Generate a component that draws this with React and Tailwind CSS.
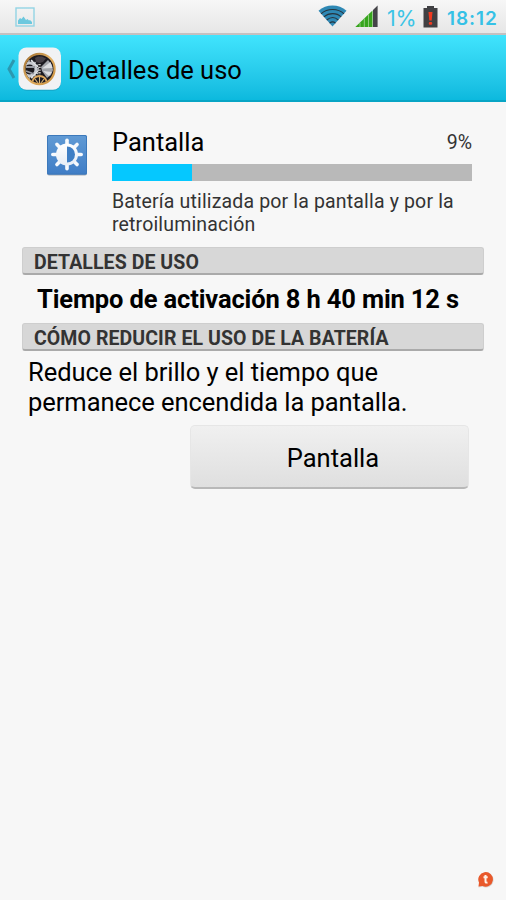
const TEETH = [0, 45, 90, 135, 180, 225, 270, 315]

function PictureIcon() {
  return (
    <svg width="20" height="20" viewBox="0 0 20 20" fill="none">
      <rect x="1" y="1" width="18" height="18" stroke="#93d4e4" strokeWidth="1.4" />
      <path d="M3 17V13.500L5 11L6.500 12L8.500 9.500L11 13L12.500 12L14 13.500L15 13L17 15V17Z" fill="#6cc8de" />
    </svg>
  )
}

function WifiIcon() {
  return (
    <svg width="30" height="24" viewBox="0 0 30 24" fill="none">
      <path d="M0.500 7.800C8 0.800 21 0.800 28.500 7.800L14.500 23.500Z" fill="#2e88b4" />
      <path d="M3 10.800C9.500 5 20 5 26 10.800M5.800 13.800C11 9.500 18.500 9.500 23.200 13.800M8.700 17C12.500 14 17 14 20.300 17M11.600 20.200C13.500 18.600 15.700 18.600 17.500 20.200" stroke="#27343d" strokeWidth="1.100" />
    </svg>
  )
}

function SignalIcon() {
  return (
    <svg width="24" height="23" viewBox="0 0 24 23">
      <path d="M0.300 22L17.500 5.500V22Z" fill="#36a51d" />
      <path d="M5 17.700V22M9.300 13.500V22M13.500 9.500V22" stroke="#b5dba9" strokeWidth="0.700" />
      <path d="M18 4.900L22.600 0.400V22H18Z" fill="#444348" />
    </svg>
  )
}

function BatteryIcon() {
  return (
    <svg width="15" height="22" viewBox="0 0 15 22">
      <path d="M4 0H11V2H14.500V21.500H0.500V2H4Z" fill="#404043" />
      <path d="M5.500 6H9.500L8.700 14.500H6.300Z" fill="#f03a20" />
      <rect x="5.800" y="16" width="3.400" height="2.800" rx="1" fill="#f03a20" />
    </svg>
  )
}

function GearsIcon() {
  return (
    <svg width="44" height="45" viewBox="0 0 44 45" fill="none">
      <defs>
        <linearGradient id="brass" x1="0" y1="0" x2="1" y2="1">
          <stop stopColor="#9c6a2c" />
          <stop offset="0.500" stopColor="#e3b266" />
          <stop offset="1" stopColor="#c98f3e" />
        </linearGradient>
        <clipPath id="dial">
          <circle cx="21.500" cy="22" r="14" />
        </clipPath>
      </defs>
      <rect x="1" y="1.800" width="42" height="42" rx="8" fill="#168aaa" opacity="0.500" />
      <rect x="0.500" y="0.500" width="42.500" height="42.300" rx="8" fill="#f1f2f4" />
      <circle cx="21.500" cy="22" r="15.100" fill="#1c1a20" />
      <g clipPath="url(#dial)">
        <path d="M17 11L20 9.500H24L28 11.500L25 15L21.500 16L18 15Z" fill="#464047" />
        <circle cx="11.500" cy="22.500" r="6.500" stroke="#c9cbd0" strokeWidth="3" />
        <circle cx="11.500" cy="22.500" r="8.500" stroke="#b4b6bc" strokeWidth="2" strokeDasharray="1.600 1.600" />
        <path d="M8 20H17M8 24L16 27" stroke="#9698a0" strokeWidth="1.800" />
        <path d="M23 20L30 13L34 18L35 23L33 28L29 31L24 24Z" fill="#a3a5ab" />
        <path d="M24 21.500L32.500 15L34.500 21ZM25 24L31 29L34 25Z" fill="#dcdde1" />
        <path d="M13 13L20 20M20 24L13 31" stroke="#e1e2e5" strokeWidth="1.300" />
        <path d="M21.500 17V28" stroke="#c6c3c0" strokeWidth="2.400" strokeDasharray="1.300 1.400" />
        <path d="M14.500 35A7 6 0 0 1 28.500 35" stroke="#dda75d" strokeWidth="1.800" />
        <path d="M21.500 30V36M17 32L20 36M26 32L23 36" stroke="#d8b77d" strokeWidth="1.100" />
      </g>
      <circle cx="21.500" cy="22" r="15.100" stroke="url(#brass)" strokeWidth="2.200" />
    </svg>
  )
}

function BrightnessIcon() {
  return (
    <svg width="42" height="42" viewBox="0 0 42 42" fill="none">
      <defs>
        <linearGradient id="blueTile" x1="0" y1="0" x2="0" y2="1">
          <stop stopColor="#619bd5" />
          <stop offset="1" stopColor="#3f7dc6" />
        </linearGradient>
        <linearGradient id="sunFill" x1="0" y1="0" x2="0" y2="1">
          <stop stopColor="#ffffff" />
          <stop offset="1" stopColor="#e6edf6" />
        </linearGradient>
      </defs>
      <rect x="1" y="2" width="40" height="39.500" rx="2" fill="#a8adb4" />
      <rect x="1" y="1" width="40" height="39.500" rx="1.500" fill="url(#blueTile)" />
      <rect x="1.500" y="1.500" width="39" height="38.500" rx="1.500" stroke="#3c79bb" />
      {TEETH.map((angle) => (
        <path key={angle} d="M21 10.500V6.300" stroke="#f6f9fd" strokeWidth="3.600" strokeLinecap="round" transform={`rotate(${angle} 21 20.500)`} />
      ))}
      <circle cx="21" cy="20.500" r="11" fill="url(#sunFill)" />
      <path d="M21 12.500A8 8 0 0 1 21 28.500Z" fill="#3f7fc5" />
    </svg>
  )
}

function SectionHeader({ children }) {
  return (
    <h2 className="h-7 rounded-[3px] border border-b-2 border-[#cecece] border-b-[#aaa] bg-[#d7d7d7] pl-[11px] text-[19.500px] font-bold leading-[29px] tracking-[0.080px] text-[#333]">
      {children}
    </h2>
  )
}

export default function App() {
  return (
    <div className="flex h-[900px] w-[506px] flex-col overflow-hidden bg-[#f7f7f7] font-['Roboto',sans-serif] text-black">
      <div className="flex h-[35px] shrink-0 items-start border-b-2 border-[#c5c0c0] bg-linear-to-b from-[#f7f7f7] to-[#e6e6e6]">
        <div className="ml-[15px] mt-[7px]"><PictureIcon /></div>
        <div className="ml-[283px] mt-[3px]"><WifiIcon /></div>
        <div className="ml-[7px] mt-[5px]"><SignalIcon /></div>
        <span className="ml-[8px] mt-[6px] w-[30px] whitespace-nowrap font-['Inter',sans-serif] text-[21.500px] leading-6 tracking-[-0.300px] text-[#3cc4e6]">1%</span>
        <div className="ml-[6px] mt-[6px]"><BatteryIcon /></div>
        <span className="ml-[9px] mt-[7px] whitespace-nowrap font-['Inter',sans-serif] text-[19px] font-semibold leading-6 tracking-[0.900px] text-[#35c1e6]">18:12</span>
      </div>

      <header className="flex h-[67px] shrink-0 items-start border-b-2 border-[#08a5c5] bg-linear-to-b from-[#40e4fd] to-[#0bb9de]">
        <svg className="ml-[6px] mt-[24px]" width="12" height="20" viewBox="0 0 12 20" fill="none">
          <path d="M8 1L3 10L8 19" stroke="#2b98b0" strokeWidth="3" />
        </svg>
        <div className="mt-[12px]"><GearsIcon /></div>
        <h1 className="ml-[6px] mt-[20px] whitespace-nowrap text-[25.500px] leading-[30px]">Detalles de uso</h1>
      </header>

      <main className="pl-[22px] pr-[22px]">
        <div className="flex h-[145px] pl-6 pt-[25px]">
          <div className="mt-[7px] w-[66px] shrink-0"><BrightnessIcon /></div>
          <div className="w-[360px]">
            <div className="flex h-[37px] items-start justify-between">
              <span className="text-[25.500px] leading-[30px]">Pantalla</span>
              <span className="text-[19.500px] leading-[31px] text-[#333]">9%</span>
            </div>
            <div className="h-[17px] bg-[#b9b9b9]">
              <div className="h-full bg-[#05c8ff]" style={{ width: "22.2%" }} />
            </div>
            <p className="mt-[9px] whitespace-nowrap text-[19.500px] leading-[23px] tracking-[0.155px] text-[#333]">
              Batería utilizada por la pantalla y por la
              <br />
              retroiluminación
            </p>
          </div>
        </div>

        <SectionHeader>DETALLES DE USO</SectionHeader>
        <p className="h-[48px] whitespace-nowrap pl-[15px] text-[25.500px] font-bold leading-[48px] tracking-[-0.140px]">
          Tiempo de activación 8 h 40 min 12 s
        </p>
        <SectionHeader>CÓMO REDUCIR EL USO DE LA BATERÍA</SectionHeader>
        <p className="mt-[7px] whitespace-nowrap pl-[6px] text-[25.500px] leading-[29.500px] tracking-[-0.050px]">
          Reduce el brillo y el tiempo que
          <br />
          permanece encendida la pantalla.
        </p>
        <button className="ml-[168px] mt-[8px] block h-[64px] w-[279px] rounded-[5px] border border-b-2 border-[#e6e6e6] border-b-[#b8b8b8] bg-linear-to-b from-[#f0f0f0] to-[#dfdfdf] pl-[7px] pt-[3px] text-[25.500px] leading-[58px]">
          Pantalla
        </button>
      </main>

      <div className="mb-[11px] mr-[11px] mt-auto self-end">
        <svg width="18" height="18" viewBox="0 0 18 18" fill="none">
          <path d="M1.500 16.500L2.200 12A7.500 7.500 0 1 1 5.500 15.500Z" fill="#c9c4c2" opacity="0.700" />
          <path d="M1.500 15.500L2 11.500A7.300 7.300 0 1 1 5.500 15Z" fill="#e9592b" />
          <path d="M8.500 4V10.500Q8.500 12 10.500 11.500M6.500 6.300H10.700" stroke="#fff3e9" strokeWidth="2" />
        </svg>
      </div>
    </div>
  )
}
